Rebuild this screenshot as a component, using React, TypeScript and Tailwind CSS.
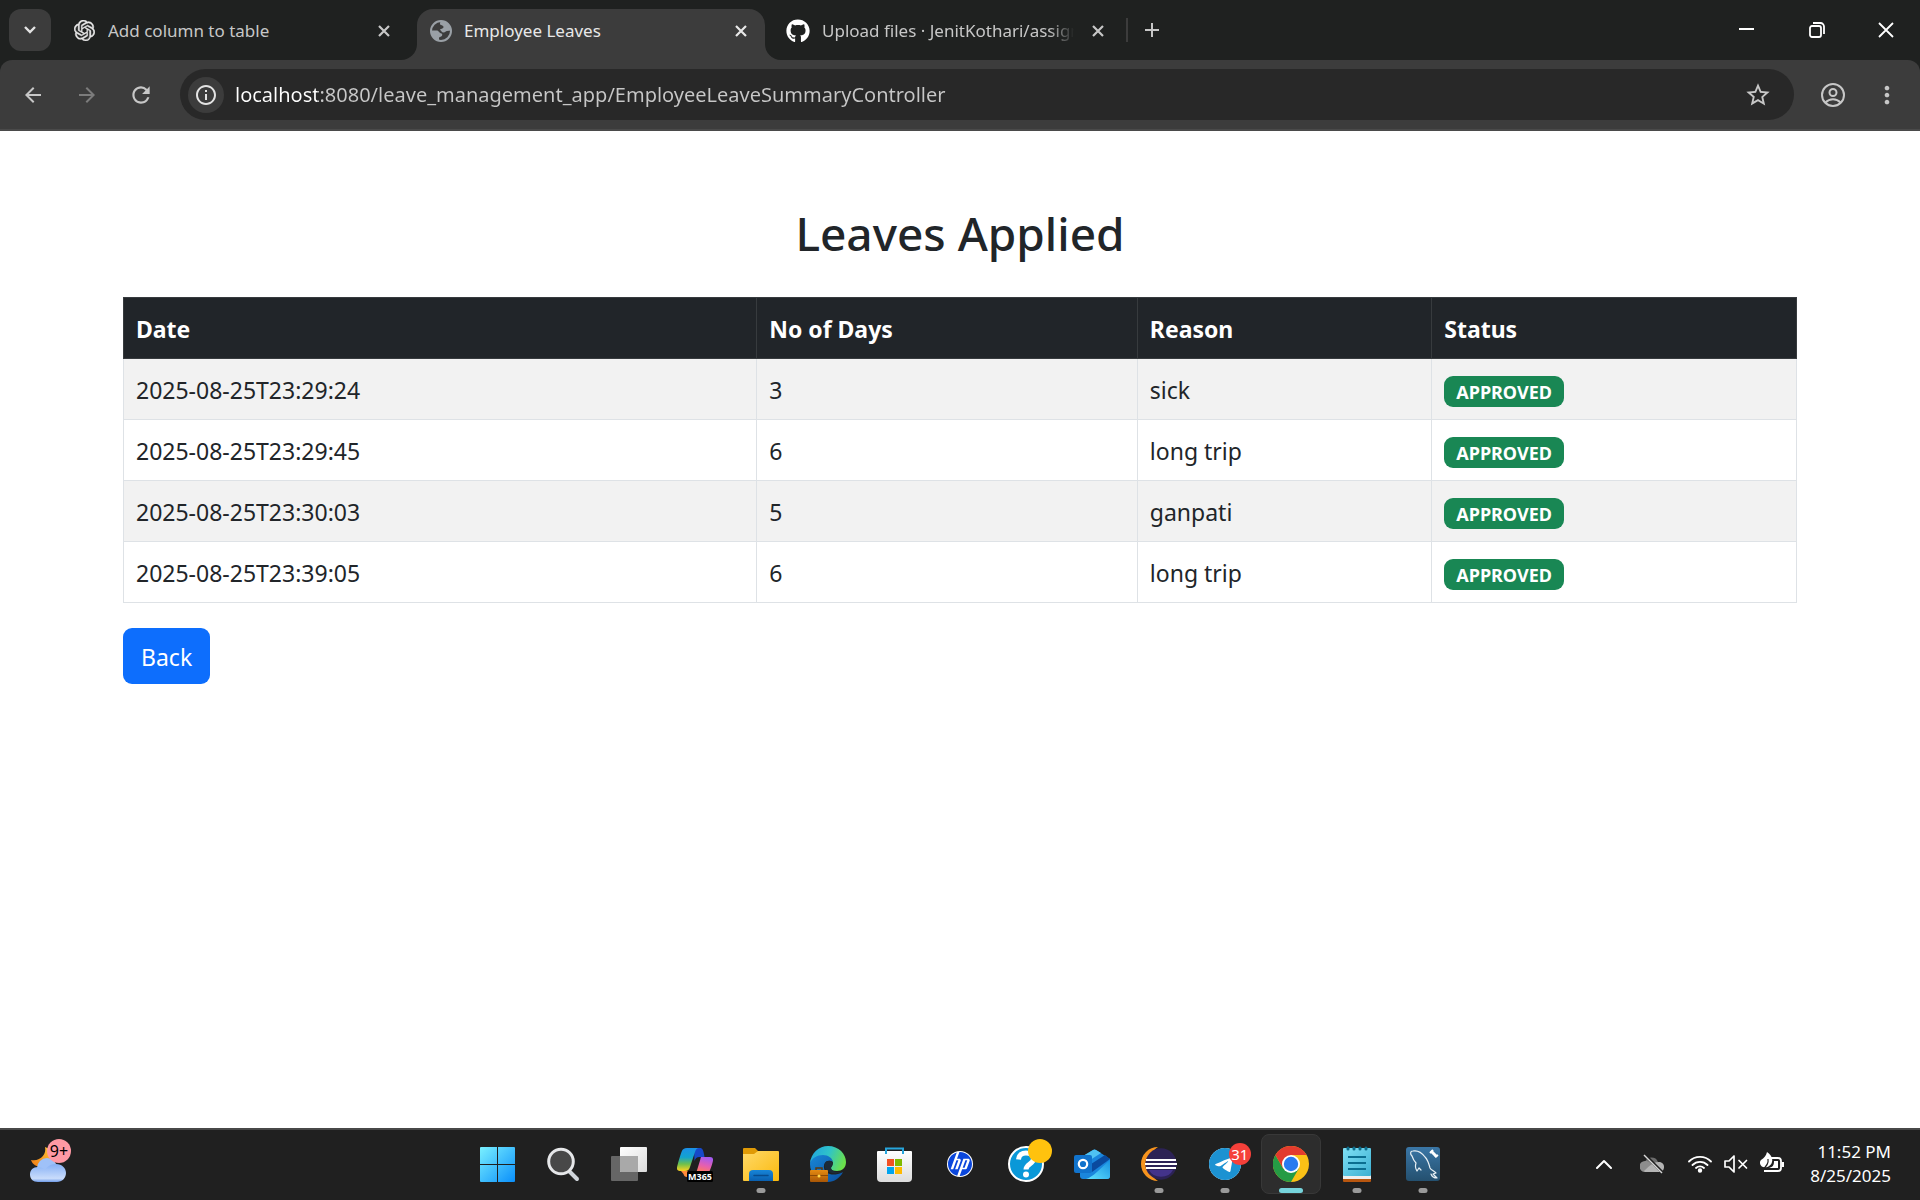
import type { ReactNode } from "react";
import { SiHp, SiOpenai, SiTelegram } from "react-icons/si";
import { FaGithub } from "react-icons/fa";
import {
  MdAdd,
  MdArrowBack,
  MdArrowForward,
  MdInfoOutline,
  MdMoreVert,
  MdRefresh,
  MdStarBorder,
} from "react-icons/md";

const leaves = [
  { date: "2025-08-25T23:29:24", days: 3, reason: "sick", status: "APPROVED" },
  { date: "2025-08-25T23:29:45", days: 6, reason: "long trip", status: "APPROVED" },
  { date: "2025-08-25T23:30:03", days: 5, reason: "ganpati", status: "APPROVED" },
  { date: "2025-08-25T23:39:05", days: 6, reason: "long trip", status: "APPROVED" },
];

function CloseButton({ label }: { label: string }) {
  return (
    <button aria-label={label} className="flex size-6 shrink-0 items-center justify-center">
      <svg className="size-3" viewBox="0 0 12 12">
        <path d="M1 1l10 10M11 1L1 11" stroke="currentColor" strokeWidth="2.200" />
      </svg>
    </button>
  );
}

function GlobeIcon() {
  return (
    <svg className="size-[22px] shrink-0 text-[#9aa0a6]" viewBox="1 1 22 22">
      <circle cx="12" cy="12" r="10" fill="none" stroke="currentColor" strokeWidth="2" />
      <path
        fill="currentColor"
        d="M12 2c5 0 9 4 10 9.500l-4 .5c-1.500 0-1.500 1.500-3.500 1.500s-2-2-3.500-2.500c0-1.500 3.500-1 3.500-3S11 6.500 11 5c0-1 0-2 1-3zM2 11.500h6c1.500 0 2 2.500 4.500 3 1.200.5 1 2.500-.5 3l-2 1V22C5 21 2 16.500 2 11.500z"
      />
    </svg>
  );
}

function TabStrip() {
  return (
    <header className="flex h-[60px] bg-[#1f2120] text-[17px] leading-6 text-[#c7c7c7]">
      <button
        aria-label="Search tabs"
        className="mt-[9px] ml-[9px] flex size-[42px] shrink-0 items-center justify-center rounded-xl bg-[#3c3c3c] text-[#e3e3e3]"
      >
        <svg className="h-2 w-3" viewBox="0 0 12 8" fill="none">
          <path d="M1 1l5 5 5-5" stroke="currentColor" strokeWidth="2.400" />
        </svg>
      </button>

      <div className="flex w-[366px] items-center pt-px pr-[21px] pl-[23px]">
        <SiOpenai className="size-[21px] text-[#e8e8e8]" stroke="currentColor" strokeWidth="0.5" />
        <span className="ml-[13px] flex-1 truncate">Add column to table</span>
        <CloseButton label="Close Add column to table" />
      </div>

      <div className="relative mt-[9px] flex w-[348px] items-center rounded-t-2xl bg-[#3c3c3c] pr-3 pb-2 pl-[13px] text-[#e8e8e8]">
        <svg className="absolute bottom-0 -left-4 size-4" viewBox="0 0 16 16">
          <path d="M16 0v16H0A16 16 0 0 0 16 0z" fill="#3c3c3c" />
        </svg>
        <svg className="absolute -right-4 bottom-0 size-4" viewBox="0 0 16 16">
          <path d="M0 0v16h16A16 16 0 0 1 0 0z" fill="#3c3c3c" />
        </svg>
        <GlobeIcon />
        <span className="ml-3 flex-1 truncate">Employee Leaves</span>
        <CloseButton label="Close Employee Leaves" />
      </div>

      <div className="flex w-[361px] items-center pt-px pr-4 pl-[21px]">
        <FaGithub className="size-6 shrink-0 text-white" />
        <span className="ml-3 flex-1 overflow-hidden mask-r-from-90% whitespace-nowrap">
          Upload files · JenitKothari/assign
        </span>
        <span className="ml-3 flex">
          <CloseButton label="Close Upload files" />
        </span>
      </div>
      <span className="mt-[18px] h-6 w-[2px] bg-[#3c3c3c]" />
      <button aria-label="New tab" className="flex w-12 items-center justify-center">
        <MdAdd className="size-6" />
      </button>

      <div className="ml-auto flex text-white">
        <button aria-label="Minimize" className="flex w-[70px] items-center justify-center">
          <svg className="size-4" viewBox="0 0 16 16">
            <path d="M0 7h15" stroke="currentColor" strokeWidth="2" />
          </svg>
        </button>
        <button aria-label="Restore" className="flex w-[70px] items-center justify-center">
          <svg className="size-4" viewBox="0 0 16 16" fill="none" stroke="currentColor" strokeWidth="1.800">
            <rect x="1" y="4" width="11" height="11" rx="2" />
            <path d="M4 1h7.500a3.500 3.500 0 0 1 3.500 3.500V12" />
          </svg>
        </button>
        <button aria-label="Close window" className="flex w-[68px] items-center justify-center">
          <svg className="size-4" viewBox="0 0 16 16">
            <path d="M1 1l14 14M15 1L1 15" stroke="currentColor" strokeWidth="1.800" />
          </svg>
        </button>
      </div>
    </header>
  );
}

function Toolbar() {
  return (
    <div className="bg-[#1f2120]">
      <nav className="flex h-[71px] items-center rounded-t-xl border-b-2 border-[#4a4a4a] bg-[#3c3c3c] text-[#c7c7c7]">
        <button aria-label="Back" className="ml-[21px] flex size-6 items-center justify-center">
          <MdArrowBack className="size-6" />
        </button>
        <button aria-label="Forward" className="ml-[30px] flex size-6 items-center justify-center text-[#7c7c7c]">
          <MdArrowForward className="size-6" />
        </button>
        <button aria-label="Reload" className="ml-[30px] flex size-6 items-center justify-center">
          <MdRefresh className="size-[26px] shrink-0" />
        </button>
        <div className="ml-[27px] flex h-[51px] flex-1 items-center rounded-full bg-[#282828] pr-[23px] pl-2">
          <button
            aria-label="View site information"
            className="flex size-9 shrink-0 items-center justify-center rounded-full bg-[#3c3c3c] text-[#e3e3e3]"
          >
            <MdInfoOutline className="size-6" />
          </button>
          <input
            aria-label="Address"
            readOnly
            value="localhost:8080/leave_management_app/EmployeeLeaveSummaryController"
            className="ml-[11px] h-9 min-w-0 flex-1 bg-linear-to-r from-white from-[82px] to-[#c7c7c7] to-[82px] bg-clip-text text-xl text-transparent outline-none"
          />
          <button aria-label="Bookmark this page" className="flex size-[26px] items-center justify-center">
            <MdStarBorder className="size-7 shrink-0" />
          </button>
        </div>
        <button aria-label="Profile" className="ml-[27px] flex size-6 items-center justify-center">
          <svg className="size-6" viewBox="0 0 24 24" fill="none" stroke="currentColor" strokeWidth="2">
            <circle cx="12" cy="12" r="11" />
            <circle cx="12" cy="9.500" r="3.500" />
            <path d="M4.500 19.500C6.500 17.400 9 16.300 12 16.300s5.500 1.100 7.500 3.200" />
          </svg>
        </button>
        <button aria-label="Menu" className="mr-[20px] ml-[29px] flex size-[26px] items-center justify-center">
          <MdMoreVert className="size-7 shrink-0" />
        </button>
      </nav>
    </div>
  );
}

function LeavesPage() {
  return (
    <main className="flex-1 bg-white px-[123px] pt-[73px] text-[23px] leading-9 text-[#212529]">
      <h2 className="text-center text-[46px] leading-[58px] font-medium">Leaves Applied</h2>
      <table className="mt-[35px] w-full table-fixed border-collapse text-left">
        <colgroup>
          <col className="w-[37.85%]" />
          <col className="w-[22.75%]" />
          <col className="w-[17.6%]" />
          <col />
        </colgroup>
        <thead className="bg-[#212529] text-white">
          <tr>
            {["Date", "No of Days", "Reason", "Status"].map((name) => (
              <th key={name} scope="col" className="border border-[#373b3e] px-3 pt-[13px] pb-[11px] font-bold">
                {name}
              </th>
            ))}
          </tr>
        </thead>
        <tbody>
          {leaves.map((leave) => (
            <tr key={leave.date} className="odd:bg-[#f2f2f2]">
              <td className="border border-[#dee2e6] px-3 pt-[13px] pb-[11px]">{leave.date}</td>
              <td className="border border-[#dee2e6] px-3 pt-[13px] pb-[11px]">{leave.days}</td>
              <td className="border border-[#dee2e6] px-3 pt-[13px] pb-[11px]">{leave.reason}</td>
              <td className="border border-[#dee2e6] px-3 py-0">
                <span className="mt-1 flex h-[31px] w-fit items-center rounded-[9px] bg-[#198754] px-3 pt-px text-lg leading-5 font-bold text-white">
                  {leave.status}
                </span>
              </td>
            </tr>
          ))}
        </tbody>
      </table>
      <a
        href="#back"
        className="mt-[25px] inline-flex h-14 items-center rounded-[9px] bg-[#0d6efd] px-[18px] pt-px text-white"
      >
        Back
      </a>
    </main>
  );
}

function WindowsLogo() {
  return (
    <svg className="size-9" viewBox="0 0 36 36">
      <defs>
        <linearGradient id="win" x1="0" y1="0" x2="36" y2="36" gradientUnits="userSpaceOnUse">
          <stop offset="0" stopColor="#7df3ff" />
          <stop offset="1" stopColor="#0a8ffb" />
        </linearGradient>
      </defs>
      <path
        fill="url(#win)"
        d="M2 1h16v17H1V2a1 1 0 0 1 1-1zM19 1h16a1 1 0 0 1 1 1v16H19zM1 19h17v17H2a1 1 0 0 1-1-1zM19 19h17v16a1 1 0 0 1-1 1H19z"
      />
    </svg>
  );
}

function SearchLogo() {
  return (
    <svg className="size-9" viewBox="0 0 36 36">
      <path d="M24.500 25.500l7.500 7.500" stroke="#cfd4da" strokeWidth="4" strokeLinecap="round" />
      <circle cx="16" cy="15.500" r="12.300" fill="#484848" stroke="#e6e7e9" strokeWidth="3" />
    </svg>
  );
}

function TaskViewLogo() {
  return (
    <svg className="size-9" viewBox="0 0 36 36">
      <defs>
        <linearGradient id="tv" x1="0" y1="0" x2="1" y2="1">
          <stop offset="0" stopColor="#ffffff" />
          <stop offset="1" stopColor="#dcdcdc" />
        </linearGradient>
      </defs>
      <rect x="0" y="10" width="27" height="25" rx="1" fill="#666" />
      <rect x="9" y="1" width="27" height="25" rx="1" fill="url(#tv)" />
      <path d="M9 10h18v16H10a1 1 0 0 1-1-1z" fill="#a9a9a9" />
    </svg>
  );
}

function CopilotLogo() {
  return (
    <svg className="size-9" viewBox="0 0 36 36">
      <defs>
        <linearGradient id="cpl" x1="0" y1="0" x2="0" y2="1">
          <stop offset="0" stopColor="#1b8fe8" />
          <stop offset=".4" stopColor="#12a3cf" />
          <stop offset=".7" stopColor="#6fc04b" />
          <stop offset="1" stopColor="#ffd21f" />
        </linearGradient>
        <linearGradient id="cpr" x1=".6" y1="0" x2=".3" y2="1">
          <stop offset="0" stopColor="#a35bf2" />
          <stop offset=".55" stopColor="#e55fb0" />
          <stop offset="1" stopColor="#ff7a5c" />
        </linearGradient>
      </defs>
      <path d="M17 2h6c2.500 0 3.500 2 4.500 9h-5c-3 0-4 1.500-5 4z" fill="#1748c9" />
      <path d="M10 2h12c-2 0-3 1-4 4l-5 15c-.8 2.500-2 4-5 4H3c-3 0-3.500-2-2.700-5C1.500 15 3 10 4.500 6 5.700 3 7 2 10 2z" fill="url(#cpl)" />
      <path d="M4 25h7l-1 6c-2 0-3-1-3.500-3z" fill="#ff8a3c" />
      <path d="M24 11h9c3 0 3.500 2 2.700 5-1 4-2.500 8-3.700 10H18c2 0 2-2 3-5l2-6.500c.5-1.500.5-2.500 1-3.500z" fill="url(#cpr)" />
      <rect x="10" y="25" width="26" height="11" rx="1.500" fill="#000" />
      <text x="23" y="33.800" fill="#fff" fontSize="9" fontWeight="700" textAnchor="middle" fontFamily="Noto Sans, sans-serif">
        M365
      </text>
    </svg>
  );
}

function FolderLogo() {
  return (
    <svg className="size-9" viewBox="0 0 36 36">
      <defs>
        <linearGradient id="fo" x1="0" y1="0" x2="1" y2="1">
          <stop offset="0" stopColor="#ffd968" />
          <stop offset="1" stopColor="#fbb90d" />
        </linearGradient>
        <linearGradient id="fb" x1="0" y1="0" x2="0" y2="1">
          <stop offset="0" stopColor="#1785d8" />
          <stop offset="1" stopColor="#0a60b0" />
        </linearGradient>
      </defs>
      <path d="M1 2h11l3 3v5H0V3a1 1 0 0 1 1-1z" fill="#e09a06" />
      <path d="M0 8h11l4-3h20a1 1 0 0 1 1 1v28a1 1 0 0 1-1 1H1a1 1 0 0 1-1-1z" fill="url(#fo)" />
      <path d="M6 35v-7a4 4 0 0 1 4-4h16a4 4 0 0 1 4 4v7z" fill="url(#fb)" />
      <path d="M11 29.500h14" stroke="#084b8c" strokeWidth="1.500" strokeLinecap="round" />
    </svg>
  );
}

function EdgeLogo() {
  return (
    <svg className="size-9" viewBox="0 0 36 36">
      <defs>
        <linearGradient id="ed1" x1="0" y1=".2" x2="1" y2=".5">
          <stop offset="0" stopColor="#1fa4df" />
          <stop offset=".5" stopColor="#2fc3c9" />
          <stop offset="1" stopColor="#6be04a" />
        </linearGradient>
        <linearGradient id="ed2" x1="0" y1="0" x2="1" y2="1">
          <stop offset="0" stopColor="#1888d8" />
          <stop offset="1" stopColor="#0b4fa0" />
        </linearGradient>
        <linearGradient id="ed3" x1="0" y1="0" x2="0" y2="1">
          <stop offset="0" stopColor="#e58b12" />
          <stop offset="1" stopColor="#a85606" />
        </linearGradient>
      </defs>
      <path d="M0 18C0 11 6 8 12 8c7 0 11 4 11 8-4-3-10 0-9 6 1 6 9 9 19 4-3 6-9 10-15 10C8 36 0 28 0 18z" fill="url(#ed2)" />
      <path d="M0 17C1 7 9 0 18 0c11 0 18 8 18 16 0 6-4 9-9 9-4 0-6-1-6-3 0-1 2-2 2-5 0-5-5-8-10-8C7 9 2 12 0 17z" fill="url(#ed1)" />
      <path d="M20 15c-4-1-7 3-5 7 2 5 10 7 18 4-4 1-12 0-12-4 0-1 2-3 1-6z" fill="#1c2b38" />
      <path d="M6 24v-2h6v2" fill="none" stroke="#5a3a10" strokeWidth="1.500" />
      <rect x="0" y="24" width="18" height="12" rx="1" fill="url(#ed3)" />
      <path d="M0 29.500h18" stroke="#8c4a05" strokeWidth="1" />
      <circle cx="9" cy="30" r="1.500" fill="#ffd84a" />
    </svg>
  );
}

function StoreLogo() {
  return (
    <svg className="size-9" viewBox="0 0 36 36">
      <defs>
        <linearGradient id="st" x1="0" y1="0" x2="0" y2="1">
          <stop offset="0" stopColor="#ffffff" />
          <stop offset="1" stopColor="#dcdcdc" />
        </linearGradient>
      </defs>
      <path d="M1 6a1 1 0 0 1 1-1h33a1 1 0 0 1 1 1v26a4 4 0 0 1-4 4H5a4 4 0 0 1-4-4z" fill="url(#st)" />
      <path d="M10 8V2.500h17V8" fill="none" stroke="#27a5dc" strokeWidth="2" />
      <path d="M11 13h7v7h-7z" fill="#f25022" />
      <path d="M19 13h7v7h-7z" fill="#7fba00" />
      <path d="M11 21h7v7h-7z" fill="#00a4ef" />
      <path d="M19 21h7v7h-7z" fill="#ffb900" />
    </svg>
  );
}

function HpLogo() {
  return (
    <span className="flex size-[26px] items-center justify-center rounded-full bg-white">
      <SiHp className="size-6 text-[#0a46dc]" />
    </span>
  );
}

function HelpLogo() {
  return (
    <svg className="size-9 overflow-visible" viewBox="0 0 36 36">
      <circle cx="18" cy="18" r="17" fill="#0a98d8" stroke="#fff" strokeWidth="2" />
      <path d="M10.500 13.500c.3-4.500 3.500-6.500 7.500-6.500s7.500 2.200 7.500 5.800c0 5.200-7.500 5.200-7.500 10.700" fill="none" stroke="#fff" strokeWidth="5" />
      <circle cx="18" cy="28.500" r="3" fill="#fff" />
      <circle cx="32" cy="5" r="12" fill="#ffc20e" />
    </svg>
  );
}

function OutlookLogo() {
  return (
    <svg className="size-9" viewBox="0 0 36 36">
      <defs>
        <linearGradient id="ol" x1="0" y1="1" x2="1" y2="0">
          <stop offset="0" stopColor="#62e4ff" />
          <stop offset="1" stopColor="#1791e0" />
        </linearGradient>
      </defs>
      <path d="M6 12L19 4a3 3 0 0 1 3 0l14 9v17a3 3 0 0 1-3 3H9a3 3 0 0 1-3-3z" fill="#1a86dc" />
      <path d="M9 10l10-6a3 3 0 0 1 3 0l5 3-17 11z" fill="#4fc3f2" />
      <path d="M14 20L31 9l5 4-18 13z" fill="#0a4a9e" />
      <path d="M36 14v16a3 3 0 0 1-3 3H12c6-1 16-12 24-19z" fill="url(#ol)" />
      <rect x="0" y="9" width="18" height="18" rx="2" fill="#1173cc" />
      <circle cx="9" cy="18" r="4.200" fill="none" stroke="#fff" strokeWidth="2.200" />
    </svg>
  );
}

function EclipseLogo() {
  return (
    <svg className="size-9" viewBox="0 0 36 36">
      <path d="M17 1A17 17 0 0 0 17 35A20 20 0 0 1 17 1z" fill="#f7941e" />
      <circle cx="20" cy="18" r="15.700" fill="#2c2255" />
      <path d="M8 24h24a13 11 0 0 1-24 0z" fill="#43338a" />
      <path d="M5 14h30M4 18h32M5 22h30" stroke="#fff" strokeWidth="2" />
    </svg>
  );
}

function TelegramLogo() {
  return (
    <span className="relative flex size-8 items-center justify-center rounded-full bg-white">
      <SiTelegram className="size-8 text-[#1c92d2]" />
      <span className="absolute -top-[5px] -right-[10px] flex size-[22px] items-center justify-center rounded-full bg-[#f5403a] text-[15px] leading-4 text-white">
        31
      </span>
    </span>
  );
}

function ChromeLogo() {
  return (
    <svg className="size-9" viewBox="0 0 36 36">
      <circle cx="18" cy="18" r="18" fill="#fbc116" />
      <path d="M2.410 9A18 18 0 0 0 18 36l7.790-13.500H10.200z" fill="#259b45" />
      <path d="M2.410 9a18 18 0 0 1 31.180 0H18l-7.800 13.500z" fill="#e33b2e" />
      <circle cx="18" cy="18" r="9" fill="#fff" />
      <circle cx="18" cy="18" r="7.200" fill="#2a7bf0" />
    </svg>
  );
}

function NotepadLogo() {
  return (
    <svg className="size-9" viewBox="0 0 36 36">
      <defs>
        <linearGradient id="np" x1="0" y1="0" x2="1" y2="1">
          <stop offset="0" stopColor="#7fe0f5" />
          <stop offset="1" stopColor="#3cb0d2" />
        </linearGradient>
      </defs>
      <rect x="4" y="28" width="28" height="8" rx="1" fill="#b8560f" />
      <rect x="4" y="26" width="28" height="7" fill="#eee" />
      <rect x="4" y="2" width="28" height="28" rx="1" fill="url(#np)" />
      <path d="M9 2v1M15 2v1M21 2v1M27 2v1" stroke="#0d6c8a" strokeWidth="3" strokeLinecap="round" />
      <path d="M9 11h18M9 17h18M9 23h18" stroke="#0b6e90" strokeWidth="2" />
    </svg>
  );
}

function WorkbenchLogo() {
  return (
    <svg className="size-9" viewBox="0 0 36 36" fill="none">
      <defs>
        <linearGradient id="wb" x1="0" y1="0" x2="0" y2="1">
          <stop offset="0" stopColor="#3a76a6" />
          <stop offset="1" stopColor="#24506f" />
        </linearGradient>
      </defs>
      <rect x="1" y="1" width="34" height="34" rx="3" fill="url(#wb)" />
      <path
        d="M16 24l-2-2-2 3c-2-3-2-5-1-8-2-2-3-4-4-7-2-2-2-5 1-5 5-1 9 2 12 6 3 3 4 7 5 11 1 2 4 3 6 5l-3 1 4 4c-3 0-5-1-6-4"
        stroke="#e8f0f5"
        strokeWidth="1.200"
        strokeLinejoin="round"
        strokeLinecap="round"
      />
      <path d="M27 6l4 4" stroke="#fff" strokeWidth="3" strokeLinecap="round" />
      <path d="M25 7l3-3M30 11l3-2" stroke="#fff" strokeWidth="2" />
    </svg>
  );
}

type TaskbarApp = { name: string; logo: ReactNode; state?: "open" | "active" };

const apps: TaskbarApp[] = [
  { name: "Start", logo: <WindowsLogo /> },
  { name: "Search", logo: <SearchLogo /> },
  { name: "Task view", logo: <TaskViewLogo /> },
  { name: "Microsoft 365 Copilot", logo: <CopilotLogo /> },
  { name: "File Explorer", logo: <FolderLogo />, state: "open" },
  { name: "Edge", logo: <EdgeLogo /> },
  { name: "Microsoft Store", logo: <StoreLogo /> },
  { name: "HP", logo: <HpLogo /> },
  { name: "Help", logo: <HelpLogo /> },
  { name: "Outlook", logo: <OutlookLogo /> },
  { name: "Eclipse", logo: <EclipseLogo />, state: "open" },
  { name: "Telegram", logo: <TelegramLogo />, state: "open" },
  { name: "Chrome", logo: <ChromeLogo />, state: "active" },
  { name: "Notepad", logo: <NotepadLogo />, state: "open" },
  { name: "MySQL Workbench", logo: <WorkbenchLogo />, state: "open" },
];

function AppButton({ app }: { app: TaskbarApp }) {
  const active = app.state === "active";
  return (
    <button
      aria-label={app.name}
      className={
        active
          ? "relative flex size-[60px] items-center justify-center rounded-lg border border-[#383838] bg-[#2d2d2d]"
          : "relative flex size-[60px] items-center justify-center"
      }
    >
      {app.logo}
      {app.state === "open" && (
        <span className="absolute bottom-px left-1/2 h-[5px] w-[9px] -translate-x-1/2 rounded-full bg-[#9a9a9a]" />
      )}
      {active && (
        <span className="absolute bottom-0 left-1/2 h-[5px] w-6 -translate-x-1/2 rounded-full bg-[#76d4dc]" />
      )}
    </button>
  );
}

function Weather() {
  return (
    <button aria-label="Weather, 9+ notifications" className="relative ml-[30px] flex size-10 items-center">
      <svg className="h-10 w-9" viewBox="0 0 36 40">
        <defs>
          <linearGradient id="mo" x1="0" y1="1" x2="1" y2="0">
            <stop offset="0" stopColor="#f07a12" />
            <stop offset="1" stopColor="#ffc93a" />
          </linearGradient>
          <linearGradient id="cl" x1="0" y1="0" x2="0" y2="1">
            <stop offset="0" stopColor="#86b0f5" />
            <stop offset=".8" stopColor="#c9dcfb" />
            <stop offset="1" stopColor="#6f9be8" />
          </linearGradient>
        </defs>
        <path d="M15 3c2 7-5 15-14 13 2 6 8 8 14 6s9-8 7-13c-1-3-4-5-7-6z" fill="url(#mo)" />
        <circle cx="17" cy="24" r="10" fill="#9fc1f8" />
        <path d="M8 23c3 0 5 1 7 3 2-3 5-6 11-6 6 0 10 4 10 9 0 5-4 9-9 9H8c-5 0-8-3-8-7.500S3 23 8 23z" fill="url(#cl)" />
      </svg>
      <span className="absolute -top-[5px] left-[17px] flex size-6 items-center justify-center rounded-full bg-[#ff99a4] text-base leading-4 text-black">
        9+
      </span>
    </button>
  );
}

function Tray() {
  return (
    <div className="flex flex-1 items-center justify-end text-white">
      <button aria-label="Show hidden icons">
        <svg className="h-3 w-4" viewBox="0 0 16 12" fill="none" stroke="currentColor" strokeWidth="2">
          <path d="M1 10l7-7 7 7" strokeLinecap="round" strokeLinejoin="round" />
        </svg>
      </button>
      <svg className="ml-7 h-5 w-6" viewBox="0 0 24 20" aria-label="OneDrive paused">
        <path d="M5 8a7 7 0 0 1 13 0l-3 3H5z" fill="#6d6d6d" />
        <path d="M5 7c4 0 5 1 7 4l5 7H5a5.500 5.500 0 0 1 0-11z" fill="#8d8d8d" />
        <path d="M4 17c2-2 6-6 10-8 5-2 10-1 10 4 0 3-2 5-5 5H5z" fill="#b4b4b4" />
        <path d="M5 1l17 17" stroke="#202020" strokeWidth="3" />
        <path d="M4 1l18 18" stroke="#d8d8d8" strokeWidth="1.500" />
      </svg>
      <svg className="ml-6 h-5 w-6" viewBox="0 0 24 20" fill="none" stroke="currentColor" strokeWidth="1.800" strokeLinecap="round" aria-label="Wi-Fi">
        <path d="M1 7.500a15.500 15.500 0 0 1 22 0M4.500 11a10.500 10.500 0 0 1 15 0M8 14a5.800 5.800 0 0 1 8 0" />
        <circle cx="12" cy="16.500" r="1.300" fill="currentColor" />
      </svg>
      <svg className="ml-3 h-5 w-6" viewBox="0 0 24 20" fill="none" stroke="currentColor" strokeWidth="1.700" strokeLinejoin="round" strokeLinecap="round" aria-label="Muted">
        <path d="M1 7h4l5-5v16l-5-5H1z" />
        <path d="M15 6.500l7.500 7.500M22.500 6.500L15 14" />
      </svg>
      <svg className="ml-3 h-6 w-6" viewBox="0 0 24 24" aria-label="Battery saver">
        <path d="M11 6h7a3 3 0 0 1 3 3v7a3 3 0 0 1-3 3H4" fill="none" stroke="currentColor" strokeWidth="1.800" />
        <path d="M21.500 10H24v5h-2.500zM14 9h4v7H9c4-1 5-3 5-7z" fill="currentColor" />
        <path d="M7 0c4 3 6 6 5 10-1 4-5 6-9 5-3-1-4-5-2-7 3-2 5-4 6-8z" fill="currentColor" />
        <path d="M8 7c1 5-2 8-6 11" stroke="#202020" strokeWidth="1.200" fill="none" />
      </svg>
      <div className="mr-[29px] ml-[26px] text-right text-[17px] leading-6">
        <div>11:52 PM</div>
        <div>8/25/2025</div>
      </div>
    </div>
  );
}

export default function App() {
  return (
    <div className="flex min-h-screen flex-col font-['Noto_Sans',sans-serif]">
      <TabStrip />
      <Toolbar />
      <LeavesPage />
      <footer className="flex h-[72px] border-t-2 border-[#484848] bg-[#202020] pb-[2px]">
        <div className="flex flex-1 items-center">
          <Weather />
        </div>
        <div className="flex w-[987px] items-center justify-between">
          {apps.map((app) => (
            <AppButton key={app.name} app={app} />
          ))}
        </div>
        <Tray />
      </footer>
    </div>
  );
}
